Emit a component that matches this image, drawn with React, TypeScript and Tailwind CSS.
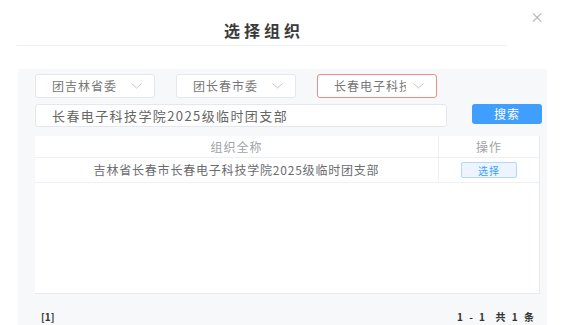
const font = { fontFamily: '"Noto Sans CJK SC", "Noto Sans", sans-serif' };

function Chevron() {
  return (
    <svg width="11" height="6" viewBox="0 0 11 6" className="ml-auto mr-[12px] shrink-0">
      <path d="M0.5 0.5 L5.5 5 L10.5 0.5" fill="none" stroke="#c0c4cc" strokeWidth="1" />
    </svg>
  );
}

function Select({ label, active, textWidth }: { label: string; active?: boolean; textWidth?: string }) {
  return (
    <div
      className={
        "flex h-[24px] w-[120px] items-center rounded-[3px] border bg-white pl-[16px] " +
        (active ? "border-[#ee8a8a]" : "border-[#e4e7ed]")
      }
    >
      <span className={"overflow-hidden whitespace-nowrap text-[12px] tracking-[1px] text-[#777] " + (textWidth ?? "")}>
        {label}
      </span>
      <Chevron />
    </div>
  );
}

export default function App() {
  return (
    <div className="relative h-[325px] w-[564px] overflow-hidden bg-white" style={font}>
      {/* header */}
      <div className="mx-[17px] flex h-[46px] w-[490px] items-center justify-center border-b border-[#f0f0f0] pt-[14px]">
        <span className="pl-[4px] text-[16px] font-bold tracking-[4px] text-[#3a3a3a]">选择组织</span>
      </div>
      <button className="absolute right-[20px] top-[9px] text-[14px] leading-none text-[#b0b3b8]">×</button>

      {/* panel */}
      <div className="ml-[18px] mt-[23px] h-[260px] w-[529px] bg-[#f7f8fa] pl-[17px] pt-[5px]">
        <div className="flex gap-[21px]">
          <Select label="团吉林省委" />
          <Select label="团长春市委" />
          <Select label="长春电子科技学院" active textWidth="w-[72px]" />
        </div>

        <div className="mt-[6px] flex items-start">
          <div className="flex h-[23px] w-[412px] items-center rounded-[3px] border border-[#e4e7ed] bg-white pl-[16px] text-[13px] tracking-[1.4px] text-[#666]">
            长春电子科技学院2025级临时团支部
          </div>
          <button className="ml-[25px] flex h-[20px] w-[70px] items-center justify-center rounded-[3px] bg-[#409eff] text-[12px] tracking-[1px] text-white">
            搜索
          </button>
        </div>

        {/* table */}
        <div className="mt-[9px] flex h-[158px] w-[505px] flex-col border-b border-r border-[#e8eaee] bg-white">
          <div className="flex h-[22px] border-b border-[#eef0f3] text-[12px] tracking-[1px] text-[#a0a3a8]">
            <div className="flex w-[404px] items-center justify-center border-r border-[#eef0f3]">组织全称</div>
            <div className="flex flex-1 items-center justify-center">操作</div>
          </div>
          <div className="flex h-[25px] border-b border-[#eef0f3] text-[12px] text-[#6a6c70]">
            <div className="flex w-[404px] items-center justify-center border-r border-[#eef0f3] tracking-[0.8px]">
              吉林省长春市长春电子科技学院2025级临时团支部
            </div>
            <div className="flex flex-1 items-center justify-center">
              <span className="flex h-[16px] w-[56px] items-center justify-center rounded-[2px] border border-[#b3d8ff] bg-[#ecf5ff] text-[10px] tracking-[1px] text-[#409eff]">
                选择
              </span>
            </div>
          </div>
        </div>

        {/* footer */}
        <div className="mt-[15px] flex w-[501px] items-center justify-between pl-[6px] text-[10px] font-bold text-[#333]">
          <span>[1]</span>
          <span className="tracking-[2px]">1 - 1&nbsp;&nbsp;共 1 条</span>
        </div>
      </div>
    </div>
  );
}
